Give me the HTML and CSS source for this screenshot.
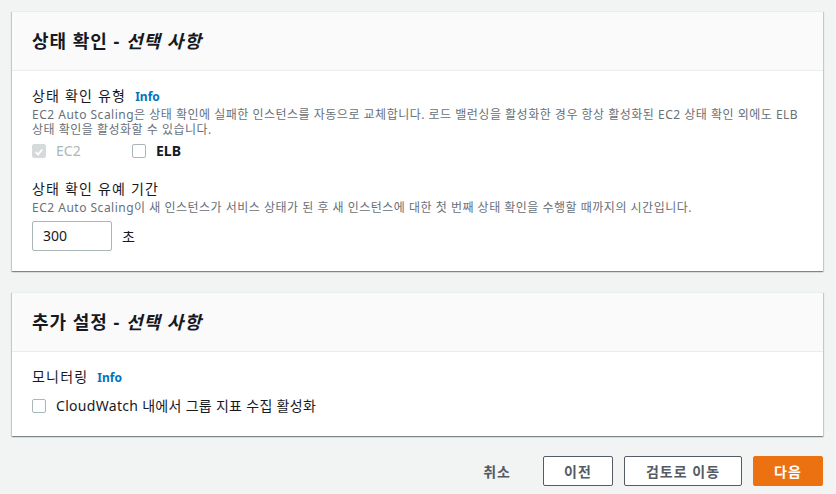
FILE: index.html
```html
<!DOCTYPE html>
<html lang="ko">
<head>
<meta charset="utf-8">
<link rel="stylesheet" href="styles.css">
</head>
<body>
<div class="page">
  <section class="card">
    <header class="card-header"><h2>상태 확인 - <i>선택 사항</i></h2></header>
    <div class="card-body">
      <div class="field">
        <div class="label">상태 확인 유형 <a class="info">Info</a></div>
        <p class="desc">EC2 Auto Scaling은 상태 확인에 실패한 인스턴스를 자동으로 교체합니다. 로드 밸런싱을 활성화한 경우 항상 활성화된 EC2 상태 확인 외에도 ELB 상태 확인을 활성화할 수 있습니다.</p>
        <div class="checks">
          <label class="check disabled"><span class="box checked"><svg viewBox="0 0 14 14" width="14" height="14"><path d="M3.2 7.2 L6 10 L10.8 4" fill="none" stroke="#fff" stroke-width="2"/></svg></span>EC2</label>
          <label class="check bold"><span class="box"></span>ELB</label>
        </div>
      </div>
      <div class="field second">
        <div class="label">상태 확인 유예 기간</div>
        <p class="desc">EC2 Auto Scaling이 새 인스턴스가 서비스 상태가 된 후 새 인스턴스에 대한 첫 번째 상태 확인을 수행할 때까지의 시간입니다.</p>
        <div class="input-row">
          <div class="input">300</div>
          <span class="unit">초</span>
        </div>
      </div>
    </div>
  </section>
  <section class="card">
    <header class="card-header"><h2>추가 설정 - <i>선택 사항</i></h2></header>
    <div class="card-body last">
      <div class="label">모니터링 <a class="info">Info</a></div>
      <label class="check mon"><span class="box"></span>CloudWatch 내에서 그룹 지표 수집 활성화</label>
    </div>
  </section>
  <div class="actions">
    <button class="btn link">취소</button>
    <button class="btn normal w69">이전</button>
    <button class="btn normal w117">검토로 이동</button>
    <button class="btn primary w69">다음</button>
  </div>
</div>
</body>
</html>
```
FILE: styles.css
```css
* { box-sizing: border-box; }
html, body { margin: 0; padding: 0; }
body {
  background: #f2f3f3;
  font-family: "Noto Sans", "Noto Sans CJK KR", sans-serif;
  color: #16191f;
  width: 836px;
  height: 494px;
  overflow: hidden;
}
.page {
  padding: 11px 13px 0 12px;
  display: flex;
  flex-direction: column;
  gap: 21px;
}
.card {
  background: #fff;
  border-top: 1px solid #eaeded;
  box-shadow: 0 1px 1px 0 rgba(0,28,36,.3), 1px 1px 1px 0 rgba(0,28,36,.15), -1px 1px 1px 0 rgba(0,28,36,.15);
}
.card-header {
  background: #fafafa;
  border-bottom: 1px solid #eaeded;
  height: 59px;
  padding: 0 20px;
  display: flex;
  align-items: center;
}
.card-header h2 {
  margin: 0;
  font-size: 18px;
  font-weight: 700;
  line-height: 22px;
  letter-spacing: 1px;
}
.card-header h2 i { font-style: italic; }
.card-body {
  padding: 14px 20px 20px;
}
.card-body.last { padding-bottom: 19px; }
.label {
  font-size: 14px;
  line-height: 22px;
  display: flex;
  align-items: center;
  letter-spacing: 1.2px;
}
.info {
  color: #0073bb;
  font-weight: 700;
  font-size: 12px;
  margin-left: 9px;
  letter-spacing: 0;
  position: relative;
  top: 1px;
}
.desc {
  margin: 0;
  font-size: 12px;
  line-height: 15px;
  color: #687078;
  letter-spacing: 0.5px;
}
.checks {
  display: flex;
  margin-top: 3px;
}
.check {
  display: flex;
  align-items: center;
  font-size: 14px;
  line-height: 22px;
}
.check.disabled { color: #aab7b8; width: 100px; }
.check.bold { font-weight: 700; }
.check.mon { letter-spacing: 0.3px; }
.box {
  width: 14px;
  height: 14px;
  border: 1px solid #aab7b8;
  border-radius: 2px;
  background: #fff;
  margin-right: 10px;
  display: inline-flex;
}
.box.checked {
  background: #d5dbdb;
  border-color: #d5dbdb;
}
.second { margin-top: 16px; }
.input-row {
  display: flex;
  align-items: center;
  margin-top: 6px;
}
.input {
  width: 80px;
  height: 30px;
  border: 1px solid #aab7b8;
  border-radius: 2px;
  padding: 0 10px;
  font-size: 14px;
  line-height: 28px;
}
.unit {
  font-size: 14px;
  margin-left: 10px;
}
.mon { margin-top: 7px; }
.actions {
  display: flex;
  justify-content: flex-end;
  align-items: center;
  gap: 11px;
  margin-top: -1px;
}
.btn {
  height: 30px;
  font-family: inherit;
  font-size: 14px;
  font-weight: 700;
  border-radius: 2px;
  padding: 0;
  letter-spacing: 1px;
  cursor: pointer;
}
.btn.link {
  border: none;
  background: none;
  color: #545b64;
  margin-right: 21px;
}
.btn.normal {
  background: #fff;
  border: 1px solid #545b64;
  color: #545b64;
}
.btn.primary {
  background: #ec7211;
  border: 1px solid #ec7211;
  color: #fff;
}
.w69 { width: 70px; }
.w117 { width: 118px; }
```
